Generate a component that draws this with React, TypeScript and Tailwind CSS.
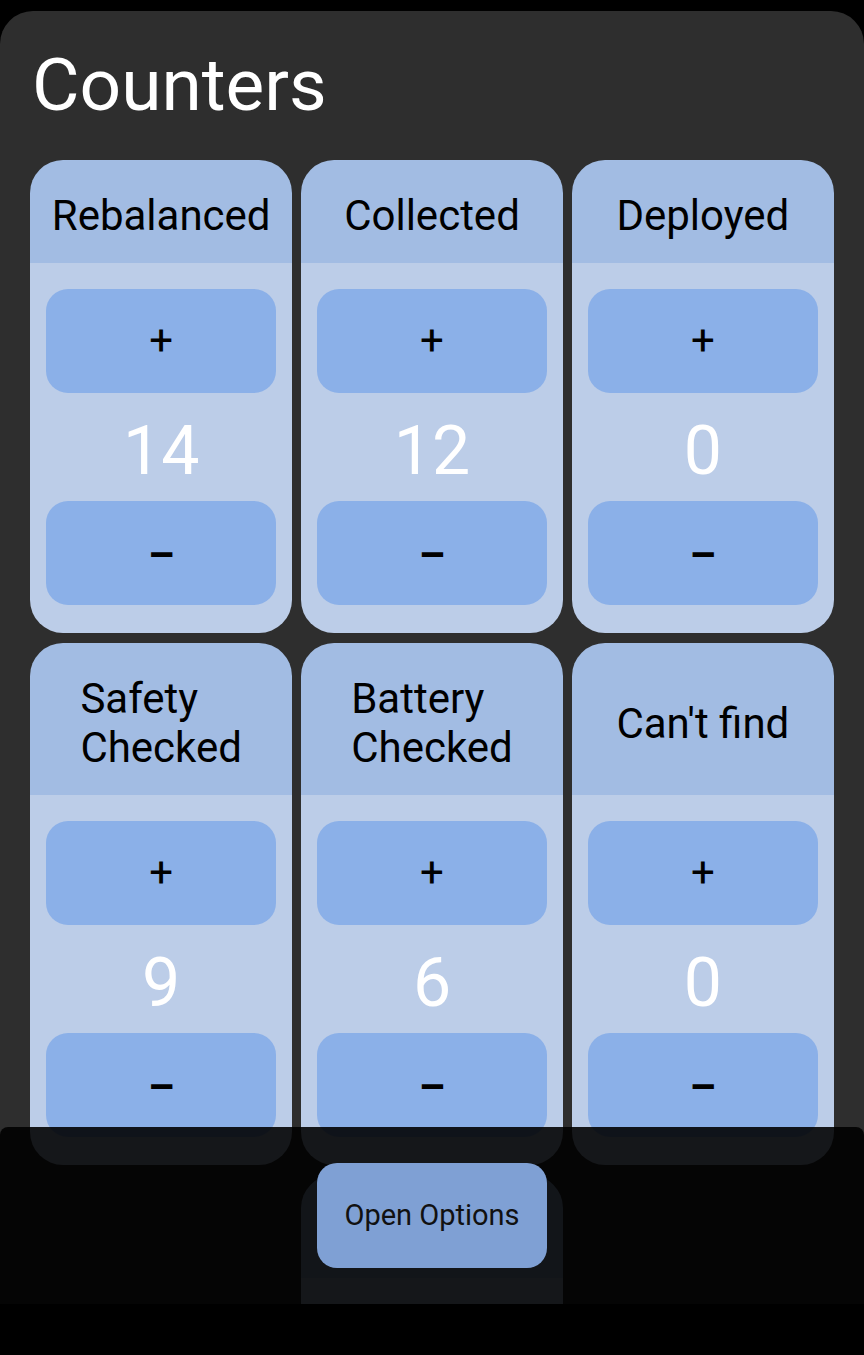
import React from 'react';

type Counter = {
  label: string[];
  count: number;
};

const counters: Counter[] = [
  { label: ['Rebalanced'], count: 14 },
  { label: ['Collected'], count: 12 },
  { label: ['Deployed'], count: 0 },
  { label: ['Safety', 'Checked'], count: 9 },
  { label: ['Battery', 'Checked'], count: 6 },
  { label: ["Can't find"], count: 0 },
];

function CounterCard({ counter }: { counter: Counter }) {
  return (
    <div className="flex flex-col rounded-[33px] overflow-hidden">
      <div className="flex-1 flex justify-center items-center bg-[#a2bce3] pt-[31px] pb-[23px]">
        <div className="text-left text-[42px] leading-[49px] text-black">
          {counter.label.map((line, i) => (
            <div key={i}>{line}</div>
          ))}
        </div>
      </div>
      <div className="bg-[#bccde8] px-[16px] pt-[26px] pb-[28px]">
        <button className="w-full h-[104px] rounded-[22px] bg-[#8bb0e8] flex items-center justify-center text-[42px] text-black leading-none">
          +
        </button>
        <div className="h-[108px] pt-[8px] text-center text-white text-[68px] leading-[100px]">
          {counter.count}
        </div>
        <button className="w-full h-[104px] pt-[5px] rounded-[22px] bg-[#8bb0e8] flex items-center justify-center text-[42px] font-bold text-black leading-none">
          –
        </button>
      </div>
    </div>
  );
}

export default function App() {
  return (
    <div
      className="relative w-[864px] h-[1355px] bg-black overflow-hidden"
      style={{ fontFamily: 'Roboto, "Noto Sans", sans-serif' }}
    >
      <div className="mt-[11px] h-[1293px] rounded-t-[33px] bg-[#2e2e2e] overflow-hidden">
        <h1 className="pt-[32px] pl-[32px] text-[73px] leading-[84px] text-white font-normal">Counters</h1>

        <div className="mt-[33px] px-[30px] grid grid-cols-3 gap-x-[8.5px] gap-y-[10px]">
          {counters.map((c, i) => (
            <CounterCard key={i} counter={c} />
          ))}
          <div />
          <CounterCard counter={{ label: ["Can't reach"], count: 0 }} />
        </div>
      </div>

      {/* bottom sheet over the list */}
      <div className="absolute left-0 right-0 top-[1127px] h-[177px] rounded-t-[8px] bg-black/[0.89]" />
      <button className="absolute left-[317px] top-[1163px] w-[230px] h-[105px] rounded-[20px] bg-[#7fa0d4] text-[29px] text-[#111] flex items-center justify-center">
        Open Options
      </button>
    </div>
  );
}
